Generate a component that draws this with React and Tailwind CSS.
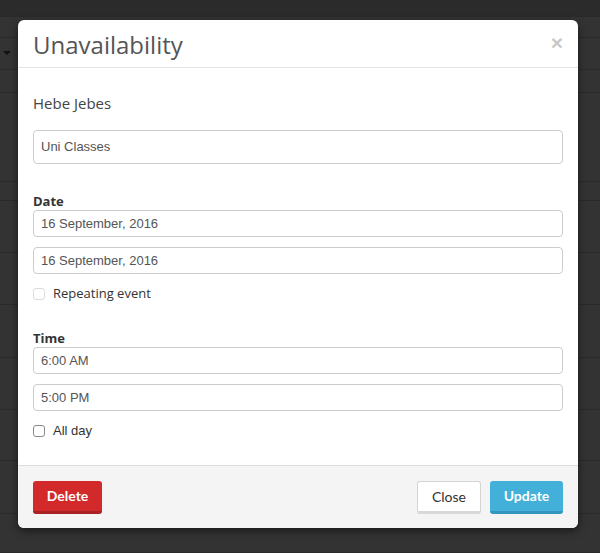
import React from "react";

const ub = { fontFamily: '"Open Sans", "Noto Sans", sans-serif' };

function Bg() {
  const rows = [
    { h: 17, c: "bg-[#2b2b2b]" },
    { h: 21, c: "" },
    { h: 32, c: "", arrow: true },
    { h: 23, c: "" },
    { h: 89, c: "" },
    { h: 19, c: "" },
    { h: 52, c: "" },
    { h: 52, c: "" },
    { h: 53, c: "" },
    { h: 52, c: "" },
    { h: 51, c: "" },
    { h: 53, c: "" },
    { h: 39, c: "" },
  ];
  return (
    <div className="flex flex-col w-[600px] h-[553px] bg-[#333333] overflow-hidden">
      {rows.map((r, i) => (
        <div
          key={i}
          className={`relative shrink-0 border-b border-[#2a2a2a] ${r.c}`}
          style={{ height: r.h }}
        >
          {r.arrow && (
            <div className="absolute left-[3px] top-[13px] w-0 h-0 border-l-[4px] border-r-[4px] border-t-[4px] border-l-transparent border-r-transparent border-t-[#111]" />
          )}
        </div>
      ))}
    </div>
  );
}

function Input({ value, h = 27 }) {
  return (
    <div
      className="w-full rounded-[4px] border border-[#cccccc] bg-white flex items-center px-[7px] text-[13px] text-[#555555]"
      style={{ height: h, fontFamily: '"Liberation Sans", Arial, sans-serif' }}
    >
      {value}
    </div>
  );
}

export default function App() {
  return (
    <div className="relative w-[600px] h-[553px] overflow-hidden">
      <Bg />
      <div className="absolute left-[18px] top-[20px] w-[560px] h-[508px] bg-white rounded-[6px] shadow-[0_3px_9px_rgba(0,0,0,0.5)] flex flex-col overflow-hidden">
        <div className="h-[48px] shrink-0 border-b border-[#e5e5e5] flex items-center justify-between pl-[15px] pr-[15px]">
          <div className="text-[24px] text-[#555555] leading-none pt-[2px]" style={ub}>
            Unavailability
          </div>
          <div className="text-[#c8c8c8] text-[21px] font-bold leading-none pb-[2px]" style={{ fontFamily: '"Liberation Sans", Arial, sans-serif' }}>
            ×
          </div>
        </div>
        <div className="flex-1 flex flex-col px-[15px]">
          <div className="mt-[25px] text-[15px] text-[#444444] leading-[20px]" style={ub}>
            Hebe Jebes
          </div>
          <div className="mt-[17px]">
            <Input value="Uni Classes" h={34} />
          </div>
          <div className="mt-[29px] text-[13px] font-bold text-[#333333] leading-[16px]" style={ub}>
            Date
          </div>
          <div className="mt-[1px]">
            <Input value="16 September, 2016" />
          </div>
          <div className="mt-[10px]">
            <Input value="16 September, 2016" />
          </div>
          <div className="mt-[13px] flex items-center gap-[8px] h-[14px]">
            <div className="w-[12px] h-[12px] rounded-[3px] border border-[#dddddd] bg-white" />
            <span className="text-[13px] text-[#333333]" style={ub}>Repeating event</span>
          </div>
          <div className="mt-[29px] text-[13px] font-bold text-[#333333] leading-[16px]" style={ub}>
            Time
          </div>
          <div className="mt-[1px]">
            <Input value="6:00 AM" />
          </div>
          <div className="mt-[10px]">
            <Input value="5:00 PM" />
          </div>
          <div className="mt-[13px] flex items-center gap-[8px] h-[14px]">
            <div className="w-[12px] h-[12px] rounded-[3px] border border-[#8a8a8a] bg-white" />
            <span className="text-[13px] text-[#333333]" style={{ fontFamily: '"Liberation Sans", Arial, sans-serif' }}>All day</span>
          </div>
        </div>
        <div
          className="h-[63px] shrink-0 border-t border-[#dddddd] bg-[#f4f4f4] flex items-center justify-between px-[15px]"
          style={{ fontFamily: 'Lato, "Open Sans", sans-serif' }}
        >
          <button className="w-[69px] h-[33px] rounded-[3px] bg-[#d22a2b] border-b-[3px] border-[#a82224] text-white font-bold text-[14px]">
            Delete
          </button>
          <div className="flex gap-[9px]">
            <button className="w-[64px] h-[33px] rounded-[3px] bg-white border border-[#d4d4d4] border-b-[3px] border-b-[#d8d8d8] text-[#333333] text-[14px]">
              Close
            </button>
            <button className="w-[73px] h-[33px] rounded-[3px] bg-[#42b0d9] border-b-[3px] border-[#3396bc] text-white font-bold text-[14px]">
              Update
            </button>
          </div>
        </div>
      </div>
    </div>
  );
}
